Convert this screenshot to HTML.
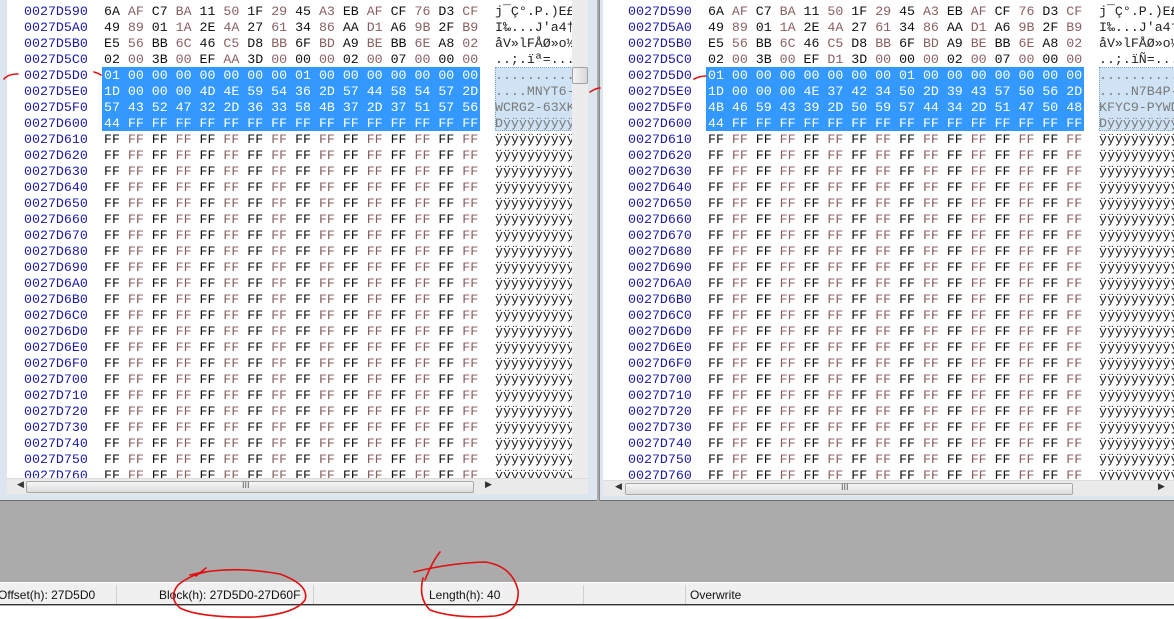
<!DOCTYPE html>
<html><head><meta charset="utf-8"><style>
*{margin:0;padding:0;box-sizing:border-box}
body{width:1174px;height:619px;overflow:hidden;background:#ababab;position:relative;font-family:"Liberation Sans",sans-serif}
.pane{position:absolute;top:0;height:501px;background:#dde6ef;border-bottom:1px solid #6e6e6e}
.white{position:absolute;background:#fff;overflow:hidden}
pre{position:absolute;font-family:"Liberation Mono",monospace;font-size:13.27px;line-height:16px;white-space:pre;top:-12px}
.off{color:#1a1aa0;font-family:"Liberation Mono",monospace;font-size:13.3px}
.hex{color:#111}
.o{color:#8a6060}
.asc{color:#222}
.sel{position:absolute;background:#3399ff;height:64px;top:67px}
.asel{position:absolute;background:#cfe3f5;border:1px dotted #7aa7d6;height:64px;top:67px}
.s{color:#fff}
.g{color:#7a7a7a}
.hs{position:absolute;height:16px;background:#eaeaea;border-top:1px solid #ddd}
.thumb{position:absolute;top:2px;height:12px;background:linear-gradient(#f6f6f6,#dcdcdc);border:1px solid #a9a9a9;border-radius:2px}
.status{position:absolute;left:0;top:582px;width:1174px;height:23px;background:#f0f0f0;border-top:1px solid #fff;border-bottom:1px solid #333;font-size:12px;color:#111}
.status span{position:absolute;top:5px}
.sep{position:absolute;top:2px;width:1px;height:19px;background:#d0d0d0}
</style></head><body>

<div class="pane" style="left:0;width:597px">
 <div class="white" style="left:7px;top:0;width:565px;height:478px">
  <div class="sel" style="left:95px;width:378px"></div>
  <div class="asel" style="left:488px;width:90px"></div>
<pre class="off" style="left:17px">0027D580
0027D590
0027D5A0
0027D5B0
0027D5C0
0027D5D0
0027D5E0
0027D5F0
0027D600
0027D610
0027D620
0027D630
0027D640
0027D650
0027D660
0027D670
0027D680
0027D690
0027D6A0
0027D6B0
0027D6C0
0027D6D0
0027D6E0
0027D6F0
0027D700
0027D710
0027D720
0027D730
0027D740
0027D750
0027D760</pre>
<pre class="hex" style="left:97px">00 <span class="o">00</span> 00 <span class="o">00</span> 00 <span class="o">00</span> 00 <span class="o">00</span> 00 <span class="o">00</span> 00 <span class="o">00</span> 00 <span class="o">00</span> 00 <span class="o">00</span>
6A <span class="o">AF</span> C7 <span class="o">BA</span> 11 <span class="o">50</span> 1F <span class="o">29</span> 45 <span class="o">A3</span> EB <span class="o">AF</span> CF <span class="o">76</span> D3 <span class="o">CF</span>
49 <span class="o">89</span> 01 <span class="o">1A</span> 2E <span class="o">4A</span> 27 <span class="o">61</span> 34 <span class="o">86</span> AA <span class="o">D1</span> A6 <span class="o">9B</span> 2F <span class="o">B9</span>
E5 <span class="o">56</span> BB <span class="o">6C</span> 46 <span class="o">C5</span> D8 <span class="o">BB</span> 6F <span class="o">BD</span> A9 <span class="o">BE</span> BB <span class="o">6E</span> A8 <span class="o">02</span>
02 <span class="o">00</span> 3B <span class="o">00</span> EF <span class="o">AA</span> 3D <span class="o">00</span> 00 <span class="o">00</span> 02 <span class="o">00</span> 07 <span class="o">00</span> 00 <span class="o">00</span>
<span class="s">01 00 00 00 00 00 00 00 01 00 00 00 00 00 00 00</span>
<span class="s">1D 00 00 00 4D 4E 59 54 36 2D 57 44 58 54 57 2D</span>
<span class="s">57 43 52 47 32 2D 36 33 58 4B 37 2D 37 51 57 56</span>
<span class="s">44 FF FF FF FF FF FF FF FF FF FF FF FF FF FF FF</span>
FF <span class="o">FF</span> FF <span class="o">FF</span> FF <span class="o">FF</span> FF <span class="o">FF</span> FF <span class="o">FF</span> FF <span class="o">FF</span> FF <span class="o">FF</span> FF <span class="o">FF</span>
FF <span class="o">FF</span> FF <span class="o">FF</span> FF <span class="o">FF</span> FF <span class="o">FF</span> FF <span class="o">FF</span> FF <span class="o">FF</span> FF <span class="o">FF</span> FF <span class="o">FF</span>
FF <span class="o">FF</span> FF <span class="o">FF</span> FF <span class="o">FF</span> FF <span class="o">FF</span> FF <span class="o">FF</span> FF <span class="o">FF</span> FF <span class="o">FF</span> FF <span class="o">FF</span>
FF <span class="o">FF</span> FF <span class="o">FF</span> FF <span class="o">FF</span> FF <span class="o">FF</span> FF <span class="o">FF</span> FF <span class="o">FF</span> FF <span class="o">FF</span> FF <span class="o">FF</span>
FF <span class="o">FF</span> FF <span class="o">FF</span> FF <span class="o">FF</span> FF <span class="o">FF</span> FF <span class="o">FF</span> FF <span class="o">FF</span> FF <span class="o">FF</span> FF <span class="o">FF</span>
FF <span class="o">FF</span> FF <span class="o">FF</span> FF <span class="o">FF</span> FF <span class="o">FF</span> FF <span class="o">FF</span> FF <span class="o">FF</span> FF <span class="o">FF</span> FF <span class="o">FF</span>
FF <span class="o">FF</span> FF <span class="o">FF</span> FF <span class="o">FF</span> FF <span class="o">FF</span> FF <span class="o">FF</span> FF <span class="o">FF</span> FF <span class="o">FF</span> FF <span class="o">FF</span>
FF <span class="o">FF</span> FF <span class="o">FF</span> FF <span class="o">FF</span> FF <span class="o">FF</span> FF <span class="o">FF</span> FF <span class="o">FF</span> FF <span class="o">FF</span> FF <span class="o">FF</span>
FF <span class="o">FF</span> FF <span class="o">FF</span> FF <span class="o">FF</span> FF <span class="o">FF</span> FF <span class="o">FF</span> FF <span class="o">FF</span> FF <span class="o">FF</span> FF <span class="o">FF</span>
FF <span class="o">FF</span> FF <span class="o">FF</span> FF <span class="o">FF</span> FF <span class="o">FF</span> FF <span class="o">FF</span> FF <span class="o">FF</span> FF <span class="o">FF</span> FF <span class="o">FF</span>
FF <span class="o">FF</span> FF <span class="o">FF</span> FF <span class="o">FF</span> FF <span class="o">FF</span> FF <span class="o">FF</span> FF <span class="o">FF</span> FF <span class="o">FF</span> FF <span class="o">FF</span>
FF <span class="o">FF</span> FF <span class="o">FF</span> FF <span class="o">FF</span> FF <span class="o">FF</span> FF <span class="o">FF</span> FF <span class="o">FF</span> FF <span class="o">FF</span> FF <span class="o">FF</span>
FF <span class="o">FF</span> FF <span class="o">FF</span> FF <span class="o">FF</span> FF <span class="o">FF</span> FF <span class="o">FF</span> FF <span class="o">FF</span> FF <span class="o">FF</span> FF <span class="o">FF</span>
FF <span class="o">FF</span> FF <span class="o">FF</span> FF <span class="o">FF</span> FF <span class="o">FF</span> FF <span class="o">FF</span> FF <span class="o">FF</span> FF <span class="o">FF</span> FF <span class="o">FF</span>
FF <span class="o">FF</span> FF <span class="o">FF</span> FF <span class="o">FF</span> FF <span class="o">FF</span> FF <span class="o">FF</span> FF <span class="o">FF</span> FF <span class="o">FF</span> FF <span class="o">FF</span>
FF <span class="o">FF</span> FF <span class="o">FF</span> FF <span class="o">FF</span> FF <span class="o">FF</span> FF <span class="o">FF</span> FF <span class="o">FF</span> FF <span class="o">FF</span> FF <span class="o">FF</span>
FF <span class="o">FF</span> FF <span class="o">FF</span> FF <span class="o">FF</span> FF <span class="o">FF</span> FF <span class="o">FF</span> FF <span class="o">FF</span> FF <span class="o">FF</span> FF <span class="o">FF</span>
FF <span class="o">FF</span> FF <span class="o">FF</span> FF <span class="o">FF</span> FF <span class="o">FF</span> FF <span class="o">FF</span> FF <span class="o">FF</span> FF <span class="o">FF</span> FF <span class="o">FF</span>
FF <span class="o">FF</span> FF <span class="o">FF</span> FF <span class="o">FF</span> FF <span class="o">FF</span> FF <span class="o">FF</span> FF <span class="o">FF</span> FF <span class="o">FF</span> FF <span class="o">FF</span>
FF <span class="o">FF</span> FF <span class="o">FF</span> FF <span class="o">FF</span> FF <span class="o">FF</span> FF <span class="o">FF</span> FF <span class="o">FF</span> FF <span class="o">FF</span> FF <span class="o">FF</span>
FF <span class="o">FF</span> FF <span class="o">FF</span> FF <span class="o">FF</span> FF <span class="o">FF</span> FF <span class="o">FF</span> FF <span class="o">FF</span> FF <span class="o">FF</span> FF <span class="o">FF</span>
FF <span class="o">FF</span> FF <span class="o">FF</span> FF <span class="o">FF</span> FF <span class="o">FF</span> FF <span class="o">FF</span> FF <span class="o">FF</span> FF <span class="o">FF</span> FF <span class="o">FF</span></pre>
<pre class="asc" style="left:488px">................
j¯Ç°.P.)E£ëé
I‰...J'a4†ªÑ
åV»lFÅØ»o½©¾
..;.ïª=.......
<span class="g">................</span>
<span class="g">....MNYT6-WDXTW-</span>
<span class="g">WCRG2-63XK7-7QWV</span>
<span class="g">Dÿÿÿÿÿÿÿÿÿÿÿÿÿÿÿ</span>
ÿÿÿÿÿÿÿÿÿÿÿÿÿÿÿÿ
ÿÿÿÿÿÿÿÿÿÿÿÿÿÿÿÿ
ÿÿÿÿÿÿÿÿÿÿÿÿÿÿÿÿ
ÿÿÿÿÿÿÿÿÿÿÿÿÿÿÿÿ
ÿÿÿÿÿÿÿÿÿÿÿÿÿÿÿÿ
ÿÿÿÿÿÿÿÿÿÿÿÿÿÿÿÿ
ÿÿÿÿÿÿÿÿÿÿÿÿÿÿÿÿ
ÿÿÿÿÿÿÿÿÿÿÿÿÿÿÿÿ
ÿÿÿÿÿÿÿÿÿÿÿÿÿÿÿÿ
ÿÿÿÿÿÿÿÿÿÿÿÿÿÿÿÿ
ÿÿÿÿÿÿÿÿÿÿÿÿÿÿÿÿ
ÿÿÿÿÿÿÿÿÿÿÿÿÿÿÿÿ
ÿÿÿÿÿÿÿÿÿÿÿÿÿÿÿÿ
ÿÿÿÿÿÿÿÿÿÿÿÿÿÿÿÿ
ÿÿÿÿÿÿÿÿÿÿÿÿÿÿÿÿ
ÿÿÿÿÿÿÿÿÿÿÿÿÿÿÿÿ
ÿÿÿÿÿÿÿÿÿÿÿÿÿÿÿÿ
ÿÿÿÿÿÿÿÿÿÿÿÿÿÿÿÿ
ÿÿÿÿÿÿÿÿÿÿÿÿÿÿÿÿ
ÿÿÿÿÿÿÿÿÿÿÿÿÿÿÿÿ
ÿÿÿÿÿÿÿÿÿÿÿÿÿÿÿÿ
ÿÿÿÿÿÿÿÿÿÿÿÿÿÿÿÿ</pre>
 </div>
 <div style="position:absolute;left:572px;top:0;width:16px;height:478px;background:#ececec"></div>
 <div style="position:absolute;left:572px;top:67px;width:16px;height:17px;background:linear-gradient(90deg,#f4f4f4,#d8d8d8);border:1px solid #a0a0a0;border-radius:2px"></div>
 <div class="hs" style="left:7px;top:478px;width:581px">
  <span style="position:absolute;left:10px;top:0;font-size:9px;color:#333">◀</span>
  <div class="thumb" style="left:19px;width:448px"><span style="position:absolute;left:215px;top:-2px;font-size:9px;color:#555">III</span></div>
  <span style="position:absolute;left:478px;top:0;font-size:9px;color:#333">▶</span>
 </div>
</div>

<div class="pane" style="left:599px;width:575px;border-left:1px solid #8a8a8a">
 <div class="white" style="left:3px;top:0;width:572px;height:480px">
  <div class="sel" style="left:103px;width:378px"></div>
  <div class="asel" style="left:496px;width:90px"></div>
<pre class="off" style="left:25px">0027D580
0027D590
0027D5A0
0027D5B0
0027D5C0
0027D5D0
0027D5E0
0027D5F0
0027D600
0027D610
0027D620
0027D630
0027D640
0027D650
0027D660
0027D670
0027D680
0027D690
0027D6A0
0027D6B0
0027D6C0
0027D6D0
0027D6E0
0027D6F0
0027D700
0027D710
0027D720
0027D730
0027D740
0027D750
0027D760</pre>
<pre class="hex" style="left:105px">00 <span class="o">00</span> 00 <span class="o">00</span> 00 <span class="o">00</span> 00 <span class="o">00</span> 00 <span class="o">00</span> 00 <span class="o">00</span> 00 <span class="o">00</span> 00 <span class="o">00</span>
6A <span class="o">AF</span> C7 <span class="o">BA</span> 11 <span class="o">50</span> 1F <span class="o">29</span> 45 <span class="o">A3</span> EB <span class="o">AF</span> CF <span class="o">76</span> D3 <span class="o">CF</span>
49 <span class="o">89</span> 01 <span class="o">1A</span> 2E <span class="o">4A</span> 27 <span class="o">61</span> 34 <span class="o">86</span> AA <span class="o">D1</span> A6 <span class="o">9B</span> 2F <span class="o">B9</span>
E5 <span class="o">56</span> BB <span class="o">6C</span> 46 <span class="o">C5</span> D8 <span class="o">BB</span> 6F <span class="o">BD</span> A9 <span class="o">BE</span> BB <span class="o">6E</span> A8 <span class="o">02</span>
02 <span class="o">00</span> 3B <span class="o">00</span> EF <span class="o">D1</span> 3D <span class="o">00</span> 00 <span class="o">00</span> 02 <span class="o">00</span> 07 <span class="o">00</span> 00 <span class="o">00</span>
<span class="s">01 00 00 00 00 00 00 00 01 00 00 00 00 00 00 00</span>
<span class="s">1D 00 00 00 4E 37 42 34 50 2D 39 43 57 50 56 2D</span>
<span class="s">4B 46 59 43 39 2D 50 59 57 44 34 2D 51 47 50 48</span>
<span class="s">44 FF FF FF FF FF FF FF FF FF FF FF FF FF FF FF</span>
FF <span class="o">FF</span> FF <span class="o">FF</span> FF <span class="o">FF</span> FF <span class="o">FF</span> FF <span class="o">FF</span> FF <span class="o">FF</span> FF <span class="o">FF</span> FF <span class="o">FF</span>
FF <span class="o">FF</span> FF <span class="o">FF</span> FF <span class="o">FF</span> FF <span class="o">FF</span> FF <span class="o">FF</span> FF <span class="o">FF</span> FF <span class="o">FF</span> FF <span class="o">FF</span>
FF <span class="o">FF</span> FF <span class="o">FF</span> FF <span class="o">FF</span> FF <span class="o">FF</span> FF <span class="o">FF</span> FF <span class="o">FF</span> FF <span class="o">FF</span> FF <span class="o">FF</span>
FF <span class="o">FF</span> FF <span class="o">FF</span> FF <span class="o">FF</span> FF <span class="o">FF</span> FF <span class="o">FF</span> FF <span class="o">FF</span> FF <span class="o">FF</span> FF <span class="o">FF</span>
FF <span class="o">FF</span> FF <span class="o">FF</span> FF <span class="o">FF</span> FF <span class="o">FF</span> FF <span class="o">FF</span> FF <span class="o">FF</span> FF <span class="o">FF</span> FF <span class="o">FF</span>
FF <span class="o">FF</span> FF <span class="o">FF</span> FF <span class="o">FF</span> FF <span class="o">FF</span> FF <span class="o">FF</span> FF <span class="o">FF</span> FF <span class="o">FF</span> FF <span class="o">FF</span>
FF <span class="o">FF</span> FF <span class="o">FF</span> FF <span class="o">FF</span> FF <span class="o">FF</span> FF <span class="o">FF</span> FF <span class="o">FF</span> FF <span class="o">FF</span> FF <span class="o">FF</span>
FF <span class="o">FF</span> FF <span class="o">FF</span> FF <span class="o">FF</span> FF <span class="o">FF</span> FF <span class="o">FF</span> FF <span class="o">FF</span> FF <span class="o">FF</span> FF <span class="o">FF</span>
FF <span class="o">FF</span> FF <span class="o">FF</span> FF <span class="o">FF</span> FF <span class="o">FF</span> FF <span class="o">FF</span> FF <span class="o">FF</span> FF <span class="o">FF</span> FF <span class="o">FF</span>
FF <span class="o">FF</span> FF <span class="o">FF</span> FF <span class="o">FF</span> FF <span class="o">FF</span> FF <span class="o">FF</span> FF <span class="o">FF</span> FF <span class="o">FF</span> FF <span class="o">FF</span>
FF <span class="o">FF</span> FF <span class="o">FF</span> FF <span class="o">FF</span> FF <span class="o">FF</span> FF <span class="o">FF</span> FF <span class="o">FF</span> FF <span class="o">FF</span> FF <span class="o">FF</span>
FF <span class="o">FF</span> FF <span class="o">FF</span> FF <span class="o">FF</span> FF <span class="o">FF</span> FF <span class="o">FF</span> FF <span class="o">FF</span> FF <span class="o">FF</span> FF <span class="o">FF</span>
FF <span class="o">FF</span> FF <span class="o">FF</span> FF <span class="o">FF</span> FF <span class="o">FF</span> FF <span class="o">FF</span> FF <span class="o">FF</span> FF <span class="o">FF</span> FF <span class="o">FF</span>
FF <span class="o">FF</span> FF <span class="o">FF</span> FF <span class="o">FF</span> FF <span class="o">FF</span> FF <span class="o">FF</span> FF <span class="o">FF</span> FF <span class="o">FF</span> FF <span class="o">FF</span>
FF <span class="o">FF</span> FF <span class="o">FF</span> FF <span class="o">FF</span> FF <span class="o">FF</span> FF <span class="o">FF</span> FF <span class="o">FF</span> FF <span class="o">FF</span> FF <span class="o">FF</span>
FF <span class="o">FF</span> FF <span class="o">FF</span> FF <span class="o">FF</span> FF <span class="o">FF</span> FF <span class="o">FF</span> FF <span class="o">FF</span> FF <span class="o">FF</span> FF <span class="o">FF</span>
FF <span class="o">FF</span> FF <span class="o">FF</span> FF <span class="o">FF</span> FF <span class="o">FF</span> FF <span class="o">FF</span> FF <span class="o">FF</span> FF <span class="o">FF</span> FF <span class="o">FF</span>
FF <span class="o">FF</span> FF <span class="o">FF</span> FF <span class="o">FF</span> FF <span class="o">FF</span> FF <span class="o">FF</span> FF <span class="o">FF</span> FF <span class="o">FF</span> FF <span class="o">FF</span>
FF <span class="o">FF</span> FF <span class="o">FF</span> FF <span class="o">FF</span> FF <span class="o">FF</span> FF <span class="o">FF</span> FF <span class="o">FF</span> FF <span class="o">FF</span> FF <span class="o">FF</span>
FF <span class="o">FF</span> FF <span class="o">FF</span> FF <span class="o">FF</span> FF <span class="o">FF</span> FF <span class="o">FF</span> FF <span class="o">FF</span> FF <span class="o">FF</span> FF <span class="o">FF</span>
FF <span class="o">FF</span> FF <span class="o">FF</span> FF <span class="o">FF</span> FF <span class="o">FF</span> FF <span class="o">FF</span> FF <span class="o">FF</span> FF <span class="o">FF</span> FF <span class="o">FF</span>
FF <span class="o">FF</span> FF <span class="o">FF</span> FF <span class="o">FF</span> FF <span class="o">FF</span> FF <span class="o">FF</span> FF <span class="o">FF</span> FF <span class="o">FF</span> FF <span class="o">FF</span></pre>
<pre class="asc" style="left:496px">................
j¯Ç°.P.)E£ëé
I‰...J'a4†ªÑ
åV»lFÅØ»o½©¾
..;.ïÑ=.......
<span class="g">................</span>
<span class="g">....N7B4P-9CWPV-</span>
<span class="g">KFYC9-PYWD4-QGPH</span>
<span class="g">Dÿÿÿÿÿÿÿÿÿÿÿÿÿÿÿ</span>
ÿÿÿÿÿÿÿÿÿÿÿÿÿÿÿÿ
ÿÿÿÿÿÿÿÿÿÿÿÿÿÿÿÿ
ÿÿÿÿÿÿÿÿÿÿÿÿÿÿÿÿ
ÿÿÿÿÿÿÿÿÿÿÿÿÿÿÿÿ
ÿÿÿÿÿÿÿÿÿÿÿÿÿÿÿÿ
ÿÿÿÿÿÿÿÿÿÿÿÿÿÿÿÿ
ÿÿÿÿÿÿÿÿÿÿÿÿÿÿÿÿ
ÿÿÿÿÿÿÿÿÿÿÿÿÿÿÿÿ
ÿÿÿÿÿÿÿÿÿÿÿÿÿÿÿÿ
ÿÿÿÿÿÿÿÿÿÿÿÿÿÿÿÿ
ÿÿÿÿÿÿÿÿÿÿÿÿÿÿÿÿ
ÿÿÿÿÿÿÿÿÿÿÿÿÿÿÿÿ
ÿÿÿÿÿÿÿÿÿÿÿÿÿÿÿÿ
ÿÿÿÿÿÿÿÿÿÿÿÿÿÿÿÿ
ÿÿÿÿÿÿÿÿÿÿÿÿÿÿÿÿ
ÿÿÿÿÿÿÿÿÿÿÿÿÿÿÿÿ
ÿÿÿÿÿÿÿÿÿÿÿÿÿÿÿÿ
ÿÿÿÿÿÿÿÿÿÿÿÿÿÿÿÿ
ÿÿÿÿÿÿÿÿÿÿÿÿÿÿÿÿ
ÿÿÿÿÿÿÿÿÿÿÿÿÿÿÿÿ
ÿÿÿÿÿÿÿÿÿÿÿÿÿÿÿÿ
ÿÿÿÿÿÿÿÿÿÿÿÿÿÿÿÿ</pre>
 </div>
 <div class="hs" style="left:3px;top:480px;width:572px">
  <span style="position:absolute;left:12px;top:0;font-size:9px;color:#333">◀</span>
  <div class="thumb" style="left:22px;width:448px"><span style="position:absolute;left:215px;top:-2px;font-size:9px;color:#555">III</span></div>
  <span style="position:absolute;left:555px;top:0;font-size:9px;color:#333">▶</span>
 </div>
</div>

<div class="status">
 <span style="left:-2px">Offset(h): 27D5D0</span>
 <div class="sep" style="left:116px"></div>
 <span style="left:159px">Block(h): 27D5D0-27D60F</span>
 <div class="sep" style="left:313px"></div>
 <span style="left:429px">Length(h): 40</span>
 <div class="sep" style="left:583px"></div>
 <div class="sep" style="left:685px"></div>
 <span style="left:690px">Overwrite</span>
</div>
<div style="position:absolute;left:0;top:606px;width:1174px;height:13px;background:#fff"></div>

<svg style="position:absolute;left:0;top:0" width="1174" height="619" fill="none" stroke="#e01010" stroke-width="1.6" stroke-linecap="round">
 <path d="M4 79 Q8 74 18 74"/>
 <path d="M94 72 Q98 73 101 75"/>
 <path d="M590 92 Q596 88 600 88"/>
 <path d="M694 79 Q700 76 706 76"/>
 <path d="M206 568 L196 576 M190 575 Q230 565 280 574 Q310 585 305 600 Q295 614 255 617 Q200 618 180 608 Q168 598 178 585 Q190 575 206 572"/>
 <path d="M440 552 Q432 562 425 580 M414 572 Q450 563 485 562 Q512 566 518 590 Q520 612 495 616 Q455 619 430 610 Q418 598 423 578"/>
</svg>
</body></html>
